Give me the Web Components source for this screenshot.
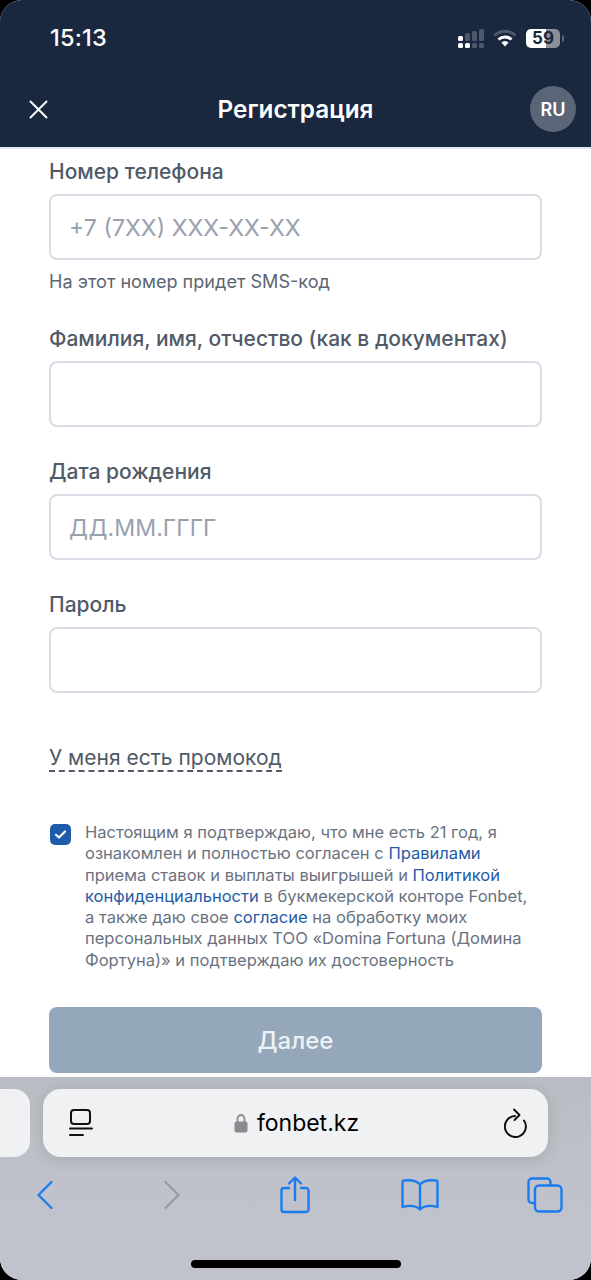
<!DOCTYPE html>
<html lang="ru">
<head>
<meta charset="utf-8">
<title>Регистрация</title>
<style>
    html, body { margin: 0; padding: 0; background: #000; }
    body { font-family: Inter, "Liberation Sans", sans-serif; }
</style>
</head>
<body>

<reg-screen>
    <reg-header slot="top" title="Регистрация" time="15:13" lang="RU"></reg-header>

    <reg-field label="Номер телефона" placeholder="+7 (7XX) XXX-XX-XX" hint="На этот номер придет SMS-код"></reg-field>
    <reg-field label="Фамилия, имя, отчество (как в документах)"></reg-field>
    <reg-field label="Дата рождения" placeholder="ДД.ММ.ГГГГ"></reg-field>
    <reg-field label="Пароль"></reg-field>

    <promo-link>У меня есть промокод</promo-link>

    <agree-box>
        Настоящим я подтверждаю, что мне есть 21 год, я ознакомлен и полностью согласен с <a>Правилами</a> приема ставок и выплаты выигрышей и <a>Политикой конфиденциальности</a> в букмекерской конторе Fonbet, а также даю свое <a>согласие</a> на обработку моих персональных данных ТОО «Domina Fortuna (Домина Фортуна)» и подтверждаю их достоверность
    </agree-box>

    <next-button>Далее</next-button>

    <safari-bar slot="bottom" url="fonbet.kz"></safari-bar>
</reg-screen>

<script>
//SCREEN
class RegScreen extends HTMLElement {
    constructor() {
        super();
        this.attachShadow({ mode: "open" });
        this.shadowRoot.innerHTML = `
        <style>
            :host{
                display: flex;
                flex-direction: column;
                width: 591px;
                height: 1280px;
                background: #fff;
                border-radius: 22px;
                overflow: hidden;
            }
            .form{
                flex: 1;
                min-height: 0;
                overflow: hidden;
                padding: 10px 49px 0;
                background: #fff;
            }
        </style>
        <slot name="top"></slot>
        <div class="form"><slot></slot></div>
        <slot name="bottom"></slot>
        `;
    }
}
customElements.define("reg-screen", RegScreen);

//HEADER + STATUS BAR
class RegHeader extends HTMLElement {
    connectedCallback() {
        const root = this.shadowRoot || this.attachShadow({ mode: "open" });
        root.innerHTML = `
        <style>
            :host{
                display: block;
                height: 147px;
                background: #19273f;
                border-bottom: 2px solid #e4e7eb;
                color: #fff;
            }
            .status{
                display: flex;
                align-items: center;
                justify-content: space-between;
                height: 38px;
                padding: 19px 31px 0 50px;
            }
            .time{ font-size: 23.5px; font-weight: 500; letter-spacing: 0.2px; margin-top: -2px; }
            .icons{ display: flex; align-items: center; gap: 9px; }
            .battery{
                position: relative;
                width: 34px;
                height: 19px;
                border-radius: 5px;
                background: linear-gradient(90deg, #fff 0 59%, #8a8f98 59% 100%);
                color: #19273f;
                font-size: 17px;
                font-weight: 700;
                line-height: 19px;
                text-align: center;
            }
            .battery::after{
                content: "";
                position: absolute;
                right: -4px;
                top: 6px;
                width: 2px;
                height: 7px;
                border-radius: 0 2px 2px 0;
                background: #5d6675;
            }
            .nav{
                display: grid;
                grid-template-columns: 1fr auto 1fr;
                align-items: center;
                height: 46px;
                margin-top: 29px;
                padding: 0 15px;
            }
            .nav svg{ display: block; margin-left: 13px; }
            .title{ font-size: 24.3px; font-weight: 600; }
            .lang{
                justify-self: end;
                width: 46px;
                height: 46px;
                border-radius: 50%;
                background: #5a6578;
                display: flex;
                align-items: center;
                justify-content: center;
                font-size: 18px;
                font-weight: 600;
            }
        </style>
        <div class="status">
            <span class="time">${this.getAttribute("time")}</span>
            <div class="icons">
                <svg width="26" height="19" viewBox="0 0 26 19" fill="#fff">
                    <rect x="0" y="7" width="5" height="5" rx="1.5"/>
                    <rect x="0" y="14" width="5" height="5" rx="1.5"/>
                    <rect x="7" y="14" width="5" height="5" rx="1.5"/>
                    <g fill="#4d586b">
                        <rect x="7" y="4" width="5" height="8" rx="1.5"/>
                        <rect x="14" y="2" width="5" height="10" rx="1.5"/>
                        <rect x="14" y="14" width="5" height="5" rx="1.5"/>
                        <rect x="21" y="0" width="5" height="12" rx="1.5"/>
                        <rect x="21" y="14" width="5" height="5" rx="1.5"/>
                    </g>
                </svg>
                <svg width="24" height="18" viewBox="0 0 24 18" fill="none" stroke-linecap="butt">
                    <path d="M1.5 6.5 A15 15 0 0 1 22.5 6.5" stroke="#4d586b" stroke-width="3"/>
                    <path d="M5.5 10.5 A9.5 9.5 0 0 1 18.5 10.5" stroke="#fff" stroke-width="3"/>
                    <path d="M12 17.5 L8.4 13.6 A5 5 0 0 1 15.6 13.6 Z" fill="#fff"/>
                </svg>
                <div class="battery">59</div>
            </div>
        </div>
        <div class="nav">
            <svg width="21" height="21" viewBox="0 0 21 21" stroke="#fff" stroke-width="2" stroke-linecap="round">
                <path d="M2.5 2.5 L18.5 18.5 M18.5 2.5 L2.5 18.5"/>
            </svg>
            <span class="title">${this.getAttribute("title")}</span>
            <div class="lang">${this.getAttribute("lang")}</div>
        </div>
        `;
    }
}
customElements.define("reg-header", RegHeader);

//FORM FIELD
class RegField extends HTMLElement {
    connectedCallback() {
        const root = this.shadowRoot || this.attachShadow({ mode: "open" });
        const hint = this.getAttribute("hint");
        const placeholder = this.getAttribute("placeholder") || "";
        root.innerHTML = `
        <style>
            :host{
                display: block;
                margin-bottom: 32px;
                color: #505a68;
            }
            .label{
                font-size: 21px;
                font-weight: 500;
                line-height: 24px;
                padding-top: 1px;
                margin-bottom: 10px;
                white-space: nowrap;
            }
            .input{
                box-sizing: border-box;
                height: 66px;
                border: 2px solid #d9dce4;
                border-radius: 8px;
                padding: 1px 18px 0;
                display: flex;
                align-items: center;
                font-size: 23.2px;
                color: #98a1ae;
                background: #fff;
            }
            .hint{
                font-size: 18.1px;
                line-height: 22px;
                padding-top: 10px;
                padding-bottom: 2px;
                color: #5c6572;
            }
        </style>
        <div class="label">${this.getAttribute("label")}</div>
        <div class="input">${placeholder}</div>
        ${hint ? `<div class="hint">${hint}</div>` : ""}
        `;
    }
}
customElements.define("reg-field", RegField);

//PROMO LINK
class PromoLink extends HTMLElement {
    constructor() {
        super();
        this.attachShadow({ mode: "open" });
        this.shadowRoot.innerHTML = `
        <style>
            :host{
                display: table;
                margin-top: 52px;
                font-size: 21px;
                line-height: 25px;
                color: #505a68;
                border-bottom: 2px dashed #505a68;
            }
        </style>
        <slot></slot>
        `;
    }
}
customElements.define("promo-link", PromoLink);

//AGREEMENT
class AgreeBox extends HTMLElement {
    constructor() {
        super();
        this.attachShadow({ mode: "open" });
        this.shadowRoot.innerHTML = `
        <style>
            :host{
                display: flex;
                gap: 14px;
                margin-top: 51px;
                padding: 0 8px 0 1px;
                font-size: 16.55px;
                line-height: 21.3px;
                color: #697280;
            }
            .box{
                flex: none;
                width: 21px;
                height: 21px;
                margin-top: 1px;
                border-radius: 5px;
                background: #1f5bab;
                display: flex;
                align-items: center;
                justify-content: center;
            }
            .text{ margin-top: -1px; }
            ::slotted(a){ color: #1f5ba6; }
        </style>
        <div class="box">
            <svg width="13" height="11" viewBox="0 0 13 11" fill="none" stroke="#fff" stroke-width="2.2" stroke-linecap="round" stroke-linejoin="round">
                <path d="M2 5.8 L5 8.5 L11 2.5"/>
            </svg>
        </div>
        <div class="text"><slot></slot></div>
        `;
    }
}
customElements.define("agree-box", AgreeBox);

//BUTTON
class NextButton extends HTMLElement {
    constructor() {
        super();
        this.attachShadow({ mode: "open" });
        this.shadowRoot.innerHTML = `
        <style>
            :host{
                display: flex;
                align-items: center;
                justify-content: center;
                height: 66px;
                margin-top: 36px;
                border-radius: 8px;
                background: #95a7ba;
                color: #eef1f4;
                font-size: 24px;
                font-weight: 500;
            }
        </style>
        <slot></slot>
        `;
    }
}
customElements.define("next-button", NextButton);

//SAFARI TOOLBAR
class SafariBar extends HTMLElement {
    connectedCallback() {
        const root = this.shadowRoot || this.attachShadow({ mode: "open" });
        root.innerHTML = `
        <style>
            :host{
                display: block;
                position: relative;
                height: 203px;
                background: linear-gradient(180deg, #b9bcc2 0, #bfc2ca 100px, #c0c3cb 100%);
                overflow: hidden;
            }
            .tabs{
                display: flex;
                gap: 13px;
                padding-top: 12px;
                margin-left: -120px;
            }
            .prev{
                flex: none;
                width: 150px;
                height: 68px;
                border-radius: 16px;
                background: #eff1f3;
            }
            .url{
                flex: none;
                box-sizing: border-box;
                width: 505px;
                height: 68px;
                border-radius: 18px;
                background: #eff1f3;
                box-shadow: 0 3px 16px rgba(0,0,0,0.12);
                display: flex;
                align-items: center;
                justify-content: space-between;
                padding: 0 20px 0 26px;
                color: #000;
            }
            .addr{
                display: flex;
                align-items: center;
                gap: 9px;
                margin-right: 4px;
                font-size: 23px;
            }
            svg{ display: block; }
            .tools{
                display: grid;
                grid-template-columns: repeat(5, 125px);
                justify-items: center;
                align-items: center;
                height: 38px;
                margin: 19px 0 0 -18px;
            }
            .fwd{ margin-left: 4px; }
            .home{
                position: absolute;
                left: 191px;
                bottom: 12px;
                width: 210px;
                height: 8px;
                border-radius: 4px;
                background: #000;
            }
        </style>
        <div class="tabs">
            <div class="prev"></div>
            <div class="url">
                <svg width="24" height="28" viewBox="0 0 24 28" fill="none" stroke="#111" stroke-width="2" stroke-linecap="round">
                    <rect x="2" y="1" width="19" height="14" rx="3"/>
                    <path d="M1 19.5 H23 M1 26 H14"/>
                </svg>
                <div class="addr">
                    <svg width="14" height="20" viewBox="0 0 14 20">
                        <path d="M3.5 9 V5.5 A3.5 3.5 0 0 1 10.5 5.5 V9" fill="none" stroke="#8a8b8e" stroke-width="1.8"/>
                        <rect x="0.5" y="8.5" width="13" height="11" rx="2" fill="#8a8b8e"/>
                    </svg>
                    <span>${this.getAttribute("url")}</span>
                </div>
                <svg width="24" height="30" viewBox="0 0 24 30" fill="none" stroke="#111" stroke-width="2" stroke-linecap="round" stroke-linejoin="round">
                    <path d="M11 8 A10.5 10.5 0 1 0 20 12.5"/>
                    <path d="M10 1.5 L15.5 7 L10.5 12"/>
                </svg>
            </div>
        </div>
        <div class="tools">
            <svg width="18" height="30" viewBox="0 0 18 30" fill="none" stroke="#1a7cf0" stroke-width="2.3" stroke-linecap="round" stroke-linejoin="round">
                <path d="M15.5 2 L2.5 15 L15.5 28"/>
            </svg>
            <svg class="fwd" width="18" height="30" viewBox="0 0 18 30" fill="none" stroke="#989ba1" stroke-width="2.3" stroke-linecap="round" stroke-linejoin="round">
                <path d="M2.5 2 L15.5 15 L2.5 28"/>
            </svg>
            <svg width="30" height="38" viewBox="0 0 30 38" fill="none" stroke="#1a7cf0" stroke-width="2.4" stroke-linecap="round" stroke-linejoin="round">
                <path d="M9 12 H4 A2.5 2.5 0 0 0 1.5 14.5 V33.5 A2.5 2.5 0 0 0 4 36 H26 A2.5 2.5 0 0 0 28.5 33.5 V14.5 A2.5 2.5 0 0 0 26 12 H21"/>
                <path d="M15 24 V2 M9 7.5 L15 1.5 L21 7.5"/>
            </svg>
            <svg width="38" height="34" viewBox="0 0 38 34" fill="none" stroke="#1a7cf0" stroke-width="2.4" stroke-linecap="round" stroke-linejoin="round">
                <path d="M19 6.5 C16 2.5 11 1.5 2.8 2.5 A1.5 1.5 0 0 0 1.5 4 V29 C9 27 15 27.5 19 31.5 C23 27.5 29 27 36.5 29 V4 A1.5 1.5 0 0 0 35.2 2.5 C27 1.5 22 2.5 19 6.5 Z M19 6.5 V31.5"/>
            </svg>
            <svg width="36" height="36" viewBox="0 0 36 36" fill="none" stroke="#1a7cf0" stroke-width="2.4" stroke-linejoin="round">
                <path d="M7 26 H5 A3.5 3.5 0 0 1 1.5 22.5 V5 A3.5 3.5 0 0 1 5 1.5 H20 A3.5 3.5 0 0 1 23.5 5 V8"/>
                <rect x="8" y="8.5" width="26.5" height="26" rx="4"/>
            </svg>
        </div>
        <div class="home"></div>
        `;
    }
}
customElements.define("safari-bar", SafariBar);
</script>
</body>
</html>
